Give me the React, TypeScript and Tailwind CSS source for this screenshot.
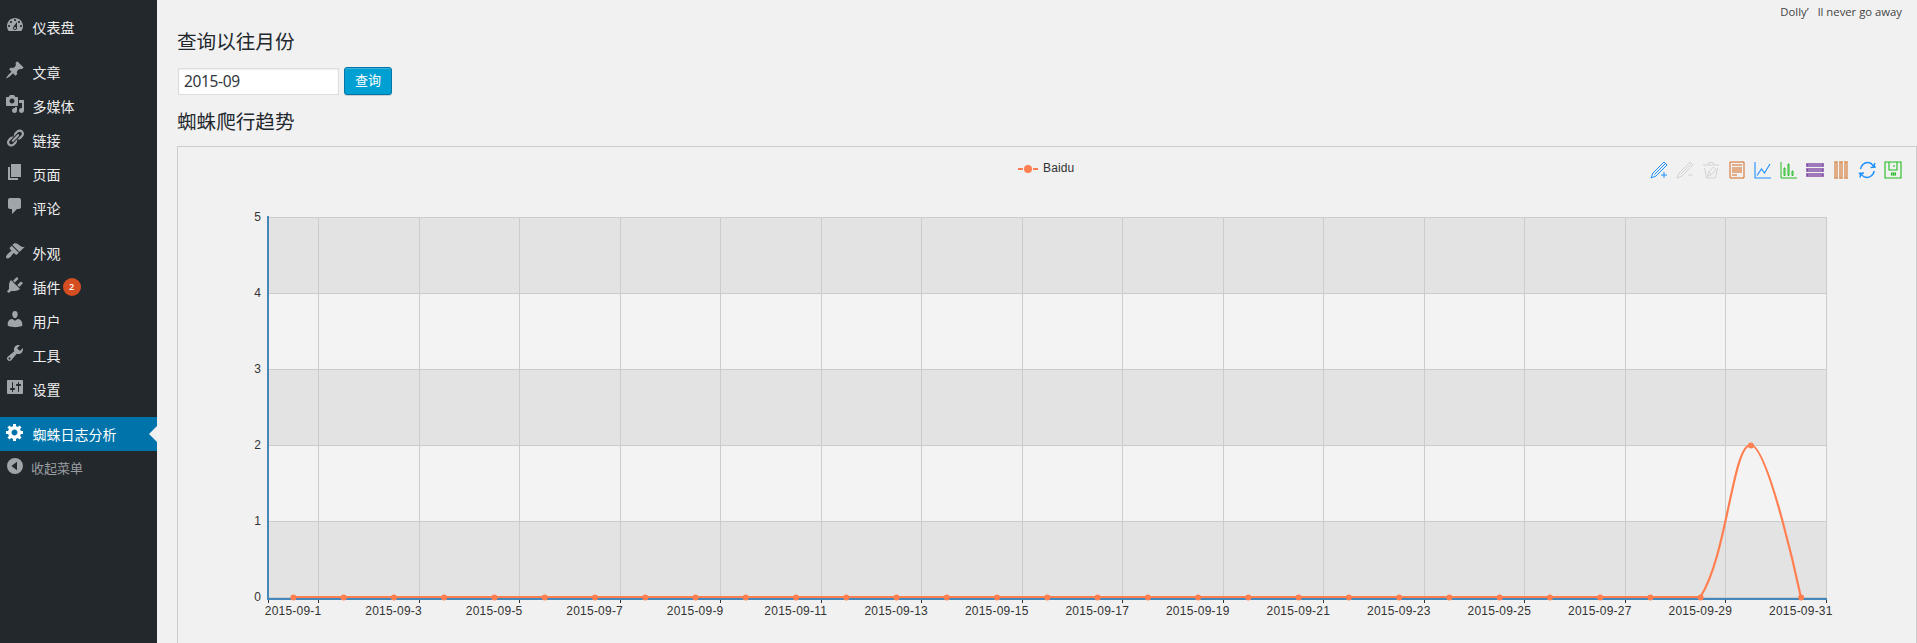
import React from "react";

type MenuItem = { label: string; icon: string; badge?: number; active?: boolean };

const icons = {
  dashboard:
    "M3.76 16h12.48c1.1-1.37 1.76-3.11 1.76-5 0-4.42-3.58-8-8-8s-8 3.58-8 8c0 1.89.66 3.63 1.76 5zM10 4c.55 0 1 .45 1 1s-.45 1-1 1-1-.45-1-1 .45-1 1-1zM6 6c.55 0 1 .45 1 1s-.45 1-1 1-1-.45-1-1 .45-1 1-1zm8 0c.55 0 1 .45 1 1s-.45 1-1 1-1-.45-1-1 .45-1 1-1zm-5.37 5.55L12 7v6c0 1.1-.9 2-2 2s-2-.9-2-2c0-.57.24-1.08.63-1.45zM4 10c.55 0 1 .45 1 1s-.45 1-1 1-1-.45-1-1 .45-1 1-1zm12 0c.55 0 1 .45 1 1s-.45 1-1 1-1-.45-1-1 .45-1 1-1zm-5 3c0-.55-.45-1-1-1s-1 .45-1 1 .45 1 1 1 1-.45 1-1z",
  post: "M10.44 3.02l1.82-1.82 6.36 6.35-1.83 1.82c-1.05-.68-2.48-.57-3.41.36l-.75.75c-.92.93-1.04 2.35-.35 3.41l-1.83 1.82-2.41-2.41-2.8 2.79c-.42.42-3.38 2.71-3.8 2.29s1.86-3.39 2.28-3.81l2.79-2.79L4.1 9.36l1.83-1.82c1.05.69 2.48.57 3.4-.36l.75-.75c.93-.92 1.05-2.35.36-3.41z",
  media:
    "M13 11V4c0-.55-.45-1-1-1h-1.67L9 1H5L3.67 3H2c-.55 0-1 .45-1 1v7c0 .55.45 1 1 1h10c.55 0 1-.45 1-1zM7 4.5c1.38 0 2.5 1.12 2.5 2.5S8.38 9.5 7 9.5 4.5 8.38 4.5 7 5.62 4.5 7 4.5zM14 6h5v10.5c0 1.38-1.12 2.5-2.5 2.5S14 17.88 14 16.5s1.12-2.5 2.5-2.5c.17 0 .34.02.5.05V9h-3V6zm-4 8.05V13h2v3.5c0 1.38-1.12 2.5-2.5 2.5S7 17.88 7 16.5 8.12 14 9.5 14c.17 0 .34.02.5.05z",
  link: "M17.74 2.76c1.68 1.69 1.68 4.41 0 6.1l-1.53 1.52c-1.12 1.12-2.7 1.47-4.14 1.09l2.62-2.61.76-.77.76-.76c.84-.84.84-2.2 0-3.04-.84-.85-2.2-.85-3.04 0l-.77.76-3.38 3.38c-.37-1.44-.02-3.02 1.1-4.14l1.52-1.53c1.69-1.68 4.42-1.68 6.1 0zM8.59 13.43l5.34-5.34c.42-.42.42-1.1 0-1.52-.44-.43-1.13-.39-1.53 0l-5.33 5.34c-.42.42-.42 1.1 0 1.52.44.43 1.13.39 1.52 0zm-.76 2.29l4.14-4.15c.38 1.44.03 3.02-1.09 4.14l-1.52 1.53c-1.69 1.68-4.41 1.68-6.1 0-1.68-1.68-1.68-4.42 0-6.1l1.53-1.52c1.12-1.12 2.7-1.47 4.14-1.1l-4.14 4.15c-.85.84-.85 2.2 0 3.05.84.84 2.2.84 3.04 0z",
  page: "M6 15V2h10v13H6zm-1 1h8v2H3V5h2v11z",
  comment: "M5 2h9c1.1 0 2 .9 2 2v7c0 1.1-.9 2-2 2h-2l-5 5v-5H5c-1.1 0-2-.9-2-2V4c0-1.1.9-2 2-2z",
  appearance:
    "M14.48 11.06L7.41 3.99l1.5-1.5c.5-.56 2.3-.47 3.51.32 1.21.8 1.43 1.28 2.91 2.1 1.18.64 2.45 1.26 4.45.85zm-.71.71L6.7 4.7 4.93 6.47c-.39.39-.39 1.02 0 1.41l1.06 1.06c.39.39.39 1.03 0 1.42-.6.6-1.43 1.11-2.21 1.69-.35.26-.7.53-1.01.84C1.43 14.23.4 16.08 1.4 17.07c.99 1 2.84-.03 4.18-1.36.31-.31.58-.66.85-1.02.57-.78 1.08-1.61 1.69-2.21.39-.39 1.02-.39 1.41 0l1.06 1.06c.39.39 1.02.39 1.41 0z",
  plugin:
    "M13.11 4.36L9.87 7.6 8 5.73l3.24-3.24c.35-.34 1.05-.2 1.56.32.52.51.66 1.21.31 1.55zm-8 1.77l.91-1.12 9.01 9.01-1.19.84c-.71.71-2.63 1.16-3.82 1.16H6.14L4.9 17.26c-.59.59-1.54.59-2.12 0-.59-.58-.59-1.53 0-2.12l1.24-1.24v-3.88c0-1.13.4-3.19 1.09-3.89zm7.26 3.97l3.24-3.24c.34-.35 1.04-.21 1.55.31.52.51.66 1.21.31 1.55l-3.24 3.25z",
  user: "M10 9.25c-2.27 0-2.73-3.44-2.73-3.44C7 4.02 7.82 2 9.97 2c2.16 0 2.98 2.02 2.71 3.81 0 0-.41 3.44-2.68 3.44zm0 2.57L12.72 10c2.39 0 4.52 2.33 4.52 4.53v2.49s-3.65 1.13-7.24 1.13c-3.65 0-7.24-1.13-7.24-1.13v-2.49c0-2.25 1.94-4.48 4.47-4.48z",
  tool: "M16.68 9.77c-1.34 1.34-3.3 1.67-4.95.99l-5.41 6.52c-.99.99-2.59.99-3.58 0s-.99-2.59 0-3.57l6.52-5.42c-.68-1.65-.35-3.61.99-4.95 1.28-1.28 3.12-1.62 4.72-1.06l-2.89 2.89 2.82 2.82 2.86-2.87c.53 1.58.18 3.39-1.08 4.65zM3.81 16.21c.4.39 1.04.39 1.43 0 .4-.4.4-1.04 0-1.43-.39-.4-1.03-.4-1.43 0-.39.39-.39 1.03 0 1.43z",
  settings:
    "M18 16V4c0-.55-.45-1-1-1H3c-.55 0-1 .45-1 1v12c0 .55.45 1 1 1h14c.55 0 1-.45 1-1zM8 11h1c.55 0 1 .45 1 1s-.45 1-1 1H8v1.5c0 .28-.22.5-.5.5s-.5-.22-.5-.5V13H6c-.55 0-1-.45-1-1s.45-1 1-1h1V5.5c0-.28.22-.5.5-.5s.5.22.5.5V11zm5-2h-1c-.55 0-1-.45-1-1s.45-1 1-1h1V5.5c0-.28.22-.5.5-.5s.5.22.5.5V7h1c.55 0 1 .45 1 1s-.45 1-1 1h-1v5.5c0 .28-.22.5-.5.5s-.5-.22-.5-.5V9z",
  generic:
    "M18 12h-2.18c-.17.7-.44 1.35-.81 1.93l1.54 1.54-2.1 2.1-1.54-1.54c-.58.36-1.23.63-1.91.79V19H8v-2.18c-.68-.16-1.33-.43-1.91-.79l-1.54 1.54-2.12-2.12 1.54-1.54c-.36-.58-.63-1.23-.79-1.91H1V9.03h2.17c.16-.7.44-1.35.8-1.94L2.43 5.55l2.1-2.1 1.54 1.54c.58-.37 1.24-.64 1.93-.81V2h3v2.18c.68.16 1.33.43 1.91.79l1.54-1.54 2.12 2.12-1.54 1.54c.36.59.64 1.24.8 1.94H18V12zm-8.5 1.5c1.66 0 3-1.34 3-3s-1.34-3-3-3-3 1.34-3 3 1.34 3 3 3z",
  collapse: "M10 2a8 8 0 1 0 0 16a8 8 0 1 0 0-16zM12 5.8v8.4L6.4 10z",
};

const groups: MenuItem[][] = [
  [{ label: "仪表盘", icon: icons.dashboard }],
  [
    { label: "文章", icon: icons.post },
    { label: "多媒体", icon: icons.media },
    { label: "链接", icon: icons.link },
    { label: "页面", icon: icons.page },
    { label: "评论", icon: icons.comment },
  ],
  [
    { label: "外观", icon: icons.appearance },
    { label: "插件", icon: icons.plugin, badge: 2 },
    { label: "用户", icon: icons.user },
    { label: "工具", icon: icons.tool },
    { label: "设置", icon: icons.settings },
  ],
];

function MenuIcon({ d, className }: { d: string; className: string }) {
  return (
    <svg viewBox="0 0 20 20" className={`ml-[5px] size-5 shrink-0 ${className}`} fill="currentColor" fillRule="evenodd">
      <path d={d} />
    </svg>
  );
}

function MenuRow({ item }: { item: MenuItem }) {
  return (
    <a
      className={`flex h-[34px] items-start ${item.active ? "bg-[#0073aa] text-white" : "text-[#eeeeee]"}`}
    >
      <MenuIcon d={item.icon} className={`mt-[5px] ${item.active ? "text-white" : "text-[#a0a5aa]"}`} />
      <span className="ml-[7.500px] flex-none text-sm leading-[35px]">{item.label}</span>
      {item.badge !== undefined && (
        <span className="mt-[8px] ml-[2px] h-[18px] w-[18px] rounded-full bg-[#d54e21] text-center text-[9px] leading-[18px] font-semibold text-white">
          {item.badge}
        </span>
      )}
      {item.active && (
        <svg viewBox="0 0 8 16" className="mt-[9px] ml-auto h-4 w-2" fill="#f0f0f0">
          <path d="M8 0v16L0 8z" />
        </svg>
      )}
    </a>
  );
}

const BLUE = "#1e90ff";
const GREEN = "#22bb22";
const PURPLE = "#4b0082";
const ORANGE = "#d2691e";
const MUTED = "#d3d3d3";
const PENCIL = "M0 16L5 14L16 3L13 0L2 11zM3.500 12.500L14.500 1.500";

const tools: { color: string; d?: string; fill?: string; marks?: string; width?: number }[] = [
  { color: BLUE, d: PENCIL + "M10 13H16M13 10V16" },
  { color: MUTED, d: PENCIL + "M11 13H16" },
  { color: MUTED, d: "M0 3H16M5 3L6 .5H10L11 3M1.500 6L3.500 16H12.500L14.500 6M4.500 14.500L5.500 10L10.500 5L13 7.500L8.500 12.500zM6 10L8.500 12.500" },
  { color: ORANGE, d: "M1 0H15V16H1zM3 3H13M3 6H13M3 8H13M3 10H13M3 13H8" },
  { color: BLUE, d: "M0 0V16H16M2 13.500L6.500 7L9.500 11L15 2", width: 1.1 },
  { color: GREEN, d: "M0 0V16H16M3 6H4V13.500H3zM7 2H8V13.500H7zM11 9H12V13.500H11z" },
  { color: PURPLE, fill: "M-1 1H17V5H-1zM-1 6H17V10H-1zM-1 11H17V15H-1z", marks: "M0 2h1v2h-1zM15 2h1v2h-1zM0 7h1v2h-1zM15 7h1v2h-1zM0 12h1v2h-1zM15 12h1v2h-1z" },
  { color: ORANGE, fill: "M1 -1H5V17H1zM6 -1H10V17H6zM11 -1H15V17H11z", marks: "M2 0h2v1h-2zM2 15h2v1h-2zM7 0h2v1h-2zM7 15h2v1h-2zM12 0h2v1h-2zM12 15h2v1h-2z" },
  {
    color: BLUE,
    d: "M1.500 7C2 3.500 5 .5 8.500 .5C11 .5 13.500 2.500 14.500 4.500M16.800 5L11.500 5.500M14.800 4.800L15.800 1M15.300 9C14.500 12.500 11.500 15.500 8.500 15.500C5.500 15.500 3 13.500 2 11.500M-.3 11.500L5 11M1.800 11.500L1 15.500",
    width: 1.5,
  },
  { color: GREEN, d: "M0 0H16V16H0zM4 0V8H12V0M9 3V5M6.500 11H10.500V13H6.500zM8.500 11V13", width: 1.1 },
];

function Toolbox() {
  return (
    <g>
      {tools.map((t, i) => (
        <g key={i} transform={`translate(${1473 + i * 26} 15)`}>
          {t.fill && <path d={t.fill} fill={t.color} fillOpacity={0.5} />}
          {t.marks && <path d={t.marks} fill={t.color} fillOpacity={0.4} />}
          {t.d && <path d={t.d} fill="none" stroke={t.color} strokeWidth={t.width ?? 1} />}
        </g>
      ))}
    </g>
  );
}

const LEFT = 90;
const TOP = 70;
const WIDTH = 1558;
const HEIGHT = 380;
const DAYS = 31;
const STEP = WIDTH / DAYS;
const values = Array.from({ length: DAYS }, (_, i) => (i === 29 ? 2 : 0));
const px = (i: number) => LEFT + STEP * (i + 0.5);
const py = (v: number) => TOP + HEIGHT - (v * HEIGHT) / 5;
const oddDays = Array.from({ length: 16 }, (_, i) => i * 2);

function TrendChart() {
  const line = `M${px(0)} ${py(0)}H${px(28)}C${px(28) + 27} ${py(0) - 42} ${px(29) - 18} ${py(2)} ${px(29)} ${py(2)}C${px(29) + 18} ${py(2)} ${px(30)} ${py(0)} ${px(30)} ${py(0)}`;
  return (
    <svg width="1738" height="510" className="block font-['Liberation_Sans',Arial,sans-serif] text-xs" fill="#333">
      {[0, 1, 2, 3, 4].map((b) => (
        <rect key={b} x={LEFT} y={TOP + b * 76} width={WIDTH} height={76} fill={b % 2 ? "#f3f3f3" : "#e3e3e3"} />
      ))}
      <g stroke="#cccccc">
        {[0, 1, 2, 3, 4, 5].map((v) => (
          <path key={v} d={`M${LEFT} ${py(v) + 0.5}h${WIDTH + 1}`} />
        ))}
        {oddDays.map((d) => (
          <path key={d} d={`M${Math.round(LEFT + STEP * (d + 1)) + 0.5} ${TOP}v${HEIGHT}`} />
        ))}
      </g>
      <path d={`M${LEFT} ${TOP - 1}v${HEIGHT + 3}M${LEFT - 1} ${TOP + HEIGHT + 2}h${WIDTH + 2}`} stroke="#4488bb" strokeWidth={2} />
      <g stroke="#333333">
        <path d={`M${LEFT + 0.5} ${TOP + HEIGHT + 3}v3`} />
        {oddDays.map((d) => (
          <path key={d} d={`M${Math.round(LEFT + STEP * (d + 1)) + 0.5} ${TOP + HEIGHT + 3}v3`} />
        ))}
      </g>
      {[0, 1, 2, 3, 4, 5].map((v) => (
        <text key={v} x={LEFT - 7} y={py(v) + 4} textAnchor="end">
          {v}
        </text>
      ))}
      {oddDays.map((d) => (
        <text key={d} x={px(d)} y={TOP + HEIGHT + 18} textAnchor="middle" className="tracking-[0.22px]">
          {`2015-09-${d + 1}`}
        </text>
      ))}
      <path d={line} fill="none" stroke="#ff7f50" strokeWidth={2.2} />
      {values.map((v, i) => (
        <circle key={i} cx={px(i) + 0.3} cy={py(v) + 0.4} r={3} fill="#ff7f50" />
      ))}
      <path d="M840 22h5M855 22h5" stroke="#ff7f50" strokeWidth={2} />
      <circle cx={850} cy={22} r={4} fill="#ff7f50" />
      <text x={865} y={25} className="tracking-[0.15px]">
        Baidu
      </text>
      <Toolbox />
    </svg>
  );
}

export default function App() {
  return (
    <div className="flex h-screen overflow-hidden bg-[#f1f1f1] font-['Open_Sans','Noto_Sans_CJK_SC',sans-serif]">
      <nav className="flex w-[157px] shrink-0 flex-col gap-[10.900px] bg-[#23282d] pt-[10.400px]">
        {groups.map((g, i) => (
          <div key={i}>
            {g.map((item) => (
              <MenuRow key={item.label} item={item} />
            ))}
          </div>
        ))}
        <div>
          <MenuRow item={{ label: "蜘蛛日志分析", icon: icons.generic, active: true }} />
          <a className="flex items-start text-[#a0a5aa]">
            <MenuIcon d={icons.collapse} className="mt-[5px]" />
            <span className="ml-1.5 text-[13px] leading-[34px] text-[#999da1]">收起菜单</span>
          </a>
        </div>
      </nav>

      <main className="flex min-w-0 flex-1 flex-col pl-5">
        <div className="flex h-6 justify-end pr-[15px] text-[11.300px] leading-6 text-[#444]">
          <span>Dolly</span>
          <span className="w-[11px]">’</span>
          <span>ll never go away</span>
        </div>
        <h2 className="mt-[3px] h-[30px] text-[19.600px] leading-[30px] font-normal text-[#23282d]">查询以往月份</h2>
        <div className="mt-[10px] flex h-[28px] gap-[5px] pl-px">
          <input
            readOnly
            value="2015-09"
            className="mt-px h-[27px] w-[161px] border border-[#dddddd] bg-white px-[5px] pb-[2px] font-['Noto_Sans','Noto_Sans_CJK_SC',sans-serif] text-[15.500px] tracking-[-0.35px] text-[#32373c] shadow-[inset_0_1px_2px_rgba(0,0,0,0.07)] outline-none"
          />
          <button className="h-[28px] w-[48px] rounded-[3px] border border-[#0073aa] bg-[#00a0d2] pb-px text-[13px] leading-[25px] text-white shadow-[inset_0_1px_0_rgba(120,200,230,0.5),0_1px_0_rgba(0,0,0,0.15)]">
            查询
          </button>
        </div>
        <h2 className="mt-[12px] h-[30px] text-[19.600px] leading-[30px] font-normal text-[#23282d]">蜘蛛爬行趋势</h2>
        <section className="mt-[9px] h-[512px] shrink-0 border border-[#cccccc]">
          <TrendChart />
        </section>
      </main>
    </div>
  );
}
